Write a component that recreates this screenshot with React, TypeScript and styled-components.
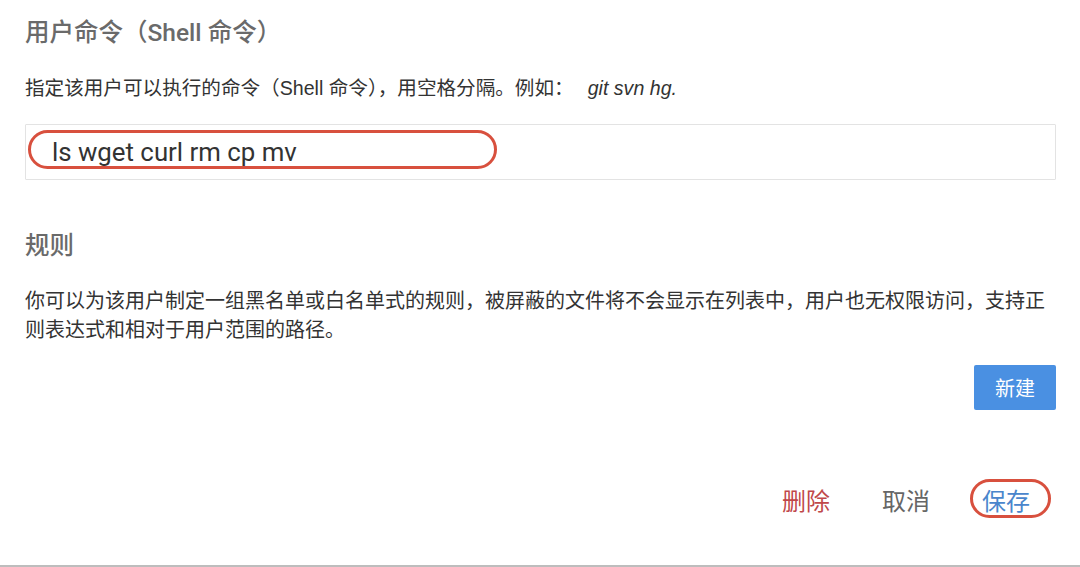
import React from "react";
import styled, { createGlobalStyle } from "styled-components";

const GlobalStyle = createGlobalStyle`
  html, body {
    margin: 0;
    padding: 0;
    background: #fff;
  }
  body {
    font-family: Roboto, "Noto Sans CJK SC", sans-serif;
  }
`;

const Page = styled.div`
  box-sizing: border-box;
  height: 567px;
  padding: 0 24px 0 25px;
  display: flex;
  flex-direction: column;
  border-bottom: 2px solid #bdbdbd;
  overflow: hidden;
`;

const SectionTitle = styled.h2<{ $top: number }>`
  margin: ${(p) => p.$top}px 0 0;
  font-size: 24.5px;
  line-height: 32px;
  font-weight: 500;
  color: #6a6a6a;
`;

const Hint = styled.p`
  margin: 26px 0 0;
  font-family: "Liberation Sans", "Noto Sans CJK SC", sans-serif;
  font-size: 19.6px;
  line-height: 26px;
  color: #333;

  em {
    margin-left: 14px;
  }
`;

const InputWrap = styled.div`
  position: relative;
  margin-top: 23px;
`;

const CommandInput = styled.input`
  box-sizing: border-box;
  width: 100%;
  height: 56px;
  padding: 0 0 0 26px;
  border: 1px solid #e3e3e3;
  border-radius: 1px;
  outline: none;
  font-family: Roboto, sans-serif;
  font-size: 25.8px;
  color: #333;
  background: #fff;
`;

const Mark = styled.span<{ $l: number; $t: number; $w: number; $h: number }>`
  position: absolute;
  left: ${(p) => p.$l}px;
  top: ${(p) => p.$t}px;
  width: ${(p) => p.$w}px;
  height: ${(p) => p.$h}px;
  box-sizing: border-box;
  border: 3px solid #d8503e;
  border-radius: 20px;
  pointer-events: none;
`;

const Paragraph = styled.p`
  margin: 23px 0 0;
  font-family: "Noto Sans CJK SC", sans-serif;
  font-size: 20px;
  line-height: 29px;
  color: #333;
`;

const NewRow = styled.div`
  display: flex;
  justify-content: flex-end;
  margin-top: 22px;
`;

const PrimaryButton = styled.button`
  height: 45px;
  padding: 0 21px;
  border: none;
  border-radius: 2px;
  background: #4a90e2;
  color: #fff;
  font-family: "Noto Sans CJK SC", sans-serif;
  font-size: 20px;
  cursor: pointer;
`;

const Actions = styled.div`
  display: flex;
  justify-content: flex-end;
  align-items: center;
  gap: 52px;
  margin-top: 69px;
  padding-right: 26px;
`;

const TextButton = styled.button<{ $tone: "danger" | "muted" | "primary" }>`
  position: relative;
  height: 40px;
  padding: 0;
  border: none;
  background: none;
  font-family: "Noto Sans CJK SC", sans-serif;
  font-size: 24px;
  color: ${(p) =>
    p.$tone === "danger" ? "#c0484a" : p.$tone === "primary" ? "#4a86cc" : "#666"};
  cursor: pointer;
`;

export default function App() {
  return (
    <>
      <GlobalStyle />
      <Page>
        <SectionTitle $top={17}>用户命令（Shell 命令）</SectionTitle>
        <Hint>
          指定该用户可以执行的命令（Shell 命令），用空格分隔。例如：<em>git svn hg.</em>
        </Hint>
        <InputWrap>
          <CommandInput readOnly defaultValue="ls wget curl rm cp mv" />
          <Mark $l={3} $t={6} $w={469} $h={39} />
        </InputWrap>

        <SectionTitle $top={50}>规则</SectionTitle>
        <Paragraph>
          你可以为该用户制定一组黑名单或白名单式的规则，被屏蔽的文件将不会显示在列表中，用户也无权限访问，支持正则表达式和相对于用户范围的路径。
        </Paragraph>
        <NewRow>
          <PrimaryButton>新建</PrimaryButton>
        </NewRow>

        <Actions>
          <TextButton $tone="danger">删除</TextButton>
          <TextButton $tone="muted">取消</TextButton>
          <TextButton $tone="primary">
            保存
            <Mark $l={-12} $t={0} $w={81} $h={39} />
          </TextButton>
        </Actions>
      </Page>
    </>
  );
}
